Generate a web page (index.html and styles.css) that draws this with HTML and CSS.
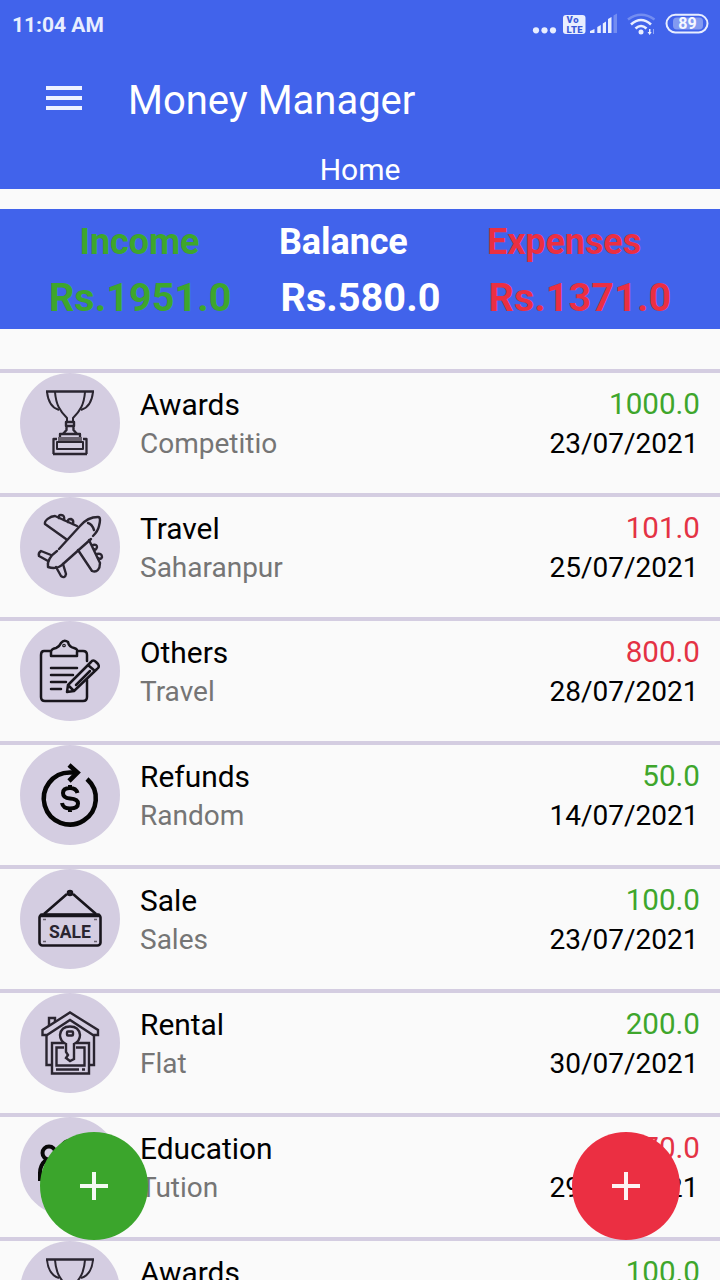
FILE: index.html
```html
<!DOCTYPE html>
<html lang="en">
<head>
<meta charset="utf-8">
<title>Money Manager</title>
<link rel="stylesheet" href="styles.css">
</head>
<body>
<svg class="defs" aria-hidden="true">
  <symbol id="trophy" viewBox="0 0 100 100">
    <g fill="none" stroke="#2a2530" stroke-width="2" stroke-linejoin="round">
      <path d="M26 18.500H74" stroke-width="2.400"/>
      <path d="M27 19C28 28 32 35 39 37M73 19C72 28 68 35 61 37"/>
      <path d="M35 19C36 32 40 38 47 45V49M65 19C64 32 60 38 53 45V49"/>
      <path d="M46 49H54V53H46ZM46.500 53V57L43 61M53.500 53V57L57 61" stroke-width="2.400"/>
      <path d="M40 65V61H60V65M33.500 81V66H37M66.500 81V66H63M33 81H67" stroke-width="2.300"/>
      <path d="M37 69H63V76H37Z"/>
      <path d="M38 66H62" stroke="#68616e" stroke-width="4"/>
    </g>
  </symbol>
  <symbol id="plane" viewBox="0 0 100 100">
    <g fill="none" stroke="#2a2530" stroke-width="2.400" stroke-linejoin="round" stroke-linecap="round">
      <path d="M39 52L60 29C65 23 70 20 78 20C81 20 80 25 79 29C78 34 76 36 73 39"/>
      <path d="M71 42L43 67C39 71 34 72 28 70C27 64 30 59 37 54"/>
      <path d="M57 29L35 19C30 19 24 24 25 27L46 42"/>
      <path d="M58 53L72 74C77 76 80 72 80 66L69 43"/>
      <path d="M39 21Q38 18 41 18Q45 18 44 23M48 25Q47 22 51 22Q54 23 53 27M73 48Q77 47 77 50Q76 54 74 52M77 57Q82 56 82 60Q81 63 78 61"/>
      <path d="M31 58L21 54Q18 56 19 59L28 64M36 70L41 79Q45 82 46 77L43 67"/>
      <path d="M68 26Q72 27 74 33"/>
    </g>
  </symbol>
  <symbol id="clipboard" viewBox="0 0 100 100">
    <g fill="none" stroke="#18151c" stroke-width="2.500" stroke-linejoin="round" stroke-linecap="round">
      <path d="M30 30H24Q21 30 21 34V76Q21 80 25 80H63Q67 80 67 76V59M67 40V34Q67 30 63 30H58"/>
      <path d="M31 35V31Q31 28 36 27Q39 26 41 22Q44 18 48 21Q49 26 54 27Q58 28 57 31V35Z"/>
      <circle cx="44" cy="24.500" r=".6"/>
      <path d="M31 47H57M31 54H53M31 61H46M31 68H41"/>
      <path d="M48 64L71 41Q73 38 76 41L78 43Q80 46 77 48L54 70L47 71ZM68 44L75 50M48 64L54 70M56 64L70 50"/>
    </g>
  </symbol>
  <symbol id="refund" viewBox="0 0 100 100">
    <g fill="none" stroke="#050505" stroke-width="4.600">
      <path d="M67 34A26 26 0 1 1 50 27.500H57"/>
      <path d="M49 20L57.500 27.500L49 36"/>
      <path d="M57.500 48Q56 43 50 43Q43 43 43 48Q43 53 50 53.500Q58 54 58 58.500Q58 63.500 50 63.500Q43 63.500 42 58M50 40V44M50 63V67" stroke-width="4"/>
    </g>
  </symbol>
  <symbol id="sale" viewBox="0 0 100 100">
    <g fill="none" stroke="#18151c" stroke-width="2.600">
      <rect x="19.500" y="45.500" width="61" height="31" rx="3"/>
      <path d="M20 46.500H80" stroke-width="3.500"/>
      <path d="M24 45L47 25M76 45L53 25"/>
      <circle cx="50" cy="24" r="2" fill="#3a3540"/>
      <path d="M23 50.500H26M74 50.500H77M23 72.500H26M74 72.500H77" stroke="#68616e" stroke-width="1.500"/>
    </g>
    <text class="sale-word" x="50" y="68.500" text-anchor="middle" textLength="42" lengthAdjust="spacingAndGlyphs">SALE</text>
  </symbol>
  <symbol id="house" viewBox="0 0 100 100">
    <g fill="none" stroke="#2a2530" stroke-width="2.400">
      <path d="M22.500 42V37L50 19.500L78 37V42H73L50 27L27 42Z"/>
      <path d="M29 33V25H35V29M26.500 42V72H31M74 42V72H69"/>
      <path d="M44 50H32V80.500H69V50H56M44 54.500H36.500V72.500H64.500V54.500H56M36 76.500H59M62 76.500H65"/>
      <path d="M46 51Q40 48 40 42Q41 33.500 50 33.500Q59 33.500 60 42Q60 48 54 51V66L50 68L46 65L48 62L46 59Z"/>
      <rect x="47" y="38.500" width="6" height="4" rx="1"/>
    </g>
  </symbol>
  <symbol id="people" viewBox="0 0 100 100">
    <g fill="none" stroke="#080808" stroke-width="4">
      <circle cx="29" cy="36" r="6.500"/>
      <path d="M20 64V56Q20 48 26 43"/>
      <circle cx="50" cy="33" r="9"/>
    </g>
  </symbol>
</svg>

<div class="screen">
  <header class="header">
    <div class="status">
      <span class="clock">11:04 AM</span>
      <svg class="status-icons" width="180" height="26" viewBox="0 0 180 26">
        <g fill="#e8eeff">
          <circle cx="6" cy="18.300" r="3.100"/><circle cx="14.500" cy="18.300" r="3.100"/><circle cx="23" cy="18.300" r="3.100"/>
          <rect x="33" y="3" width="22.500" height="19" rx="3"/>
          <path d="M60 21V19L64.500 17V21ZM67.300 21V15L70.800 13V21ZM72.800 21V11.500L76 9.500V21ZM78 21V7L81.500 5V21Z"/>
          <path d="M83.500 21V3.500L87 1.500V21Z" opacity=".3"/>
          <circle cx="111" cy="20" r="2.500"/>
          <path d="M119 17h1.500v3h1.200l-2 3l-2.200-3h1.500z"/>
          <path d="M123 17h1v5h-1z" opacity=".5"/>
        </g>
        <g fill="none" stroke="#e8eeff" stroke-width="2.600">
          <path d="M105.500 16.500Q111 11.500 116.500 16.500M101 12.500Q111 3.500 121 12.500"/>
          <path d="M98 7.500Q111-2 124.500 7.500" opacity=".3"/>
          <rect x="136.500" y="2.800" width="41" height="17.600" rx="8.800" stroke-width="2"/>
        </g>
        <rect x="143" y="5.500" width="30" height="12" rx="4" fill="#a6b8f5" opacity=".65"/>
        <text class="volte" x="36.500" y="11.300" textLength="12">Vo</text>
        <text class="volte" x="36.500" y="20.500" textLength="16">LTE</text>
        <text class="battery" x="157.500" y="17.300" text-anchor="middle">89</text>
      </svg>
    </div>
    <div class="toolbar">
      <svg class="menu" width="36" height="24" viewBox="0 0 36 24"><path d="M0 2H36M0 12H36M0 22H36" stroke="#eef2ff" stroke-width="4"/></svg>
      <h1 class="title">Money Manager</h1>
    </div>
    <div class="page-name">Home</div>
  </header>

  <section class="summary">
    <div class="total income"><span class="label">Income</span><span class="value">Rs.1951.0</span></div>
    <div class="total balance"><span class="label">Balance</span><span class="value">Rs.580.0</span></div>
    <div class="total expenses"><span class="label">Expenses</span><span class="value">Rs.1371.0</span></div>
  </section>

  <main class="list">
    <article class="row"><svg class="avatar"><use href="#trophy"/></svg><div class="info"><span class="name">Awards</span><span class="note">Competitio</span></div><div class="figures"><span class="amount in">1000.0</span><span class="date">23/07/2021</span></div></article>
    <article class="row"><svg class="avatar"><use href="#plane"/></svg><div class="info"><span class="name">Travel</span><span class="note">Saharanpur</span></div><div class="figures"><span class="amount out">101.0</span><span class="date">25/07/2021</span></div></article>
    <article class="row"><svg class="avatar"><use href="#clipboard"/></svg><div class="info"><span class="name">Others</span><span class="note">Travel</span></div><div class="figures"><span class="amount out">800.0</span><span class="date">28/07/2021</span></div></article>
    <article class="row"><svg class="avatar"><use href="#refund"/></svg><div class="info"><span class="name">Refunds</span><span class="note">Random</span></div><div class="figures"><span class="amount in">50.0</span><span class="date">14/07/2021</span></div></article>
    <article class="row"><svg class="avatar"><use href="#sale"/></svg><div class="info"><span class="name">Sale</span><span class="note">Sales</span></div><div class="figures"><span class="amount in">100.0</span><span class="date">23/07/2021</span></div></article>
    <article class="row"><svg class="avatar"><use href="#house"/></svg><div class="info"><span class="name">Rental</span><span class="note">Flat</span></div><div class="figures"><span class="amount in">200.0</span><span class="date">30/07/2021</span></div></article>
    <article class="row"><svg class="avatar"><use href="#people"/></svg><div class="info"><span class="name">Education</span><span class="note">Tution</span></div><div class="figures"><span class="amount out">470.0</span><span class="date">29/07/2021</span></div></article>
    <article class="row"><svg class="avatar"><use href="#trophy"/></svg><div class="info"><span class="name">Awards</span></div><div class="figures"><span class="amount in">100.0</span></div></article>
  </main>

  <button class="fab fab-in" aria-label="Add income"><svg width="28" height="28" viewBox="0 0 28 28"><path d="M14 0V28M0 14H28" stroke="#f4faf3" stroke-width="4"/></svg></button>
  <button class="fab fab-out" aria-label="Add expense"><svg width="28" height="28" viewBox="0 0 28 28"><path d="M14 0V28M0 14H28" stroke="#fdf2f3" stroke-width="4"/></svg></button>
</div>
</body>
</html>
```
FILE: styles.css
```css
* { box-sizing: border-box; }
body { margin: 0; font-family: Roboto, sans-serif; background: #fafafa; }
.defs { position: absolute; width: 0; height: 0; }
.screen { position: relative; width: 720px; height: 1280px; overflow: hidden; background: #fafafa; }

.header { height: 189px; background: #4163eb; color: #fff; }
.status { height: 48px; padding: 12px 10px 0 12px; display: flex; justify-content: space-between; align-items: flex-start; }
.clock { font-size: 21px; line-height: 26px; font-weight: 700; color: #e8eeff; }
.volte { font-size: 9.5px; font-weight: 900; fill: #3b5bd9; }
.battery { font-size: 16px; font-weight: 700; fill: #f5f8ff; }
.toolbar { height: 100px; padding: 0 46px; display: flex; align-items: center; gap: 46px; }
.title { margin: 0; font-size: 40px; line-height: 48px; font-weight: 400; padding-top: 5px; }
.page-name { font-size: 30px; line-height: 44px; text-align: center; }

.summary { margin-top: 20px; height: 120px; display: flex; background: #4163eb; font-weight: 700; }
.total { display: flex; flex-direction: column; padding-top: 8px; }
.label { font-size: 36px; line-height: 50px; letter-spacing: -0.1px; }
.value { font-size: 39.7px; line-height: 62px; padding-left: 1.5px; }
.income { width: 279px; align-items: center; color: #3ea62c; }
.balance { width: 208px; color: #fff; }
.expenses { color: #eb2f42; }

.list { margin-top: 40px; }
.row { height: 124px; border-top: 4px solid #d4cde1; padding: 0 20px; display: flex; }
.avatar { width: 100px; height: 100px; border-radius: 50%; background: #d4cde1; flex: none; }
.info, .figures { display: flex; flex-direction: column; padding-top: 12px; font-size: 28px; line-height: 39px; white-space: nowrap; }
.info { flex: 1; padding-left: 20px; }
.figures { align-items: flex-end; }
.amount { font-size: 29.6px; }
.name { font-size: 29.9px; color: #000; }
.date { padding-right: 1.5px; color: #000; }
.note { color: #757575; }
.in { color: #3ea62c; }
.out { color: #e43244; }
.sale-word { font-size: 19px; font-weight: 700; fill: #2a2530; }

.fab { position: absolute; top: 1132px; width: 108px; height: 108px; padding: 0; border: 0; border-radius: 50%; display: flex; align-items: center; justify-content: center; }
.fab-in { left: 40px; background: #3ba52c; }
.fab-out { left: 572px; background: #eb2f42; }
```
